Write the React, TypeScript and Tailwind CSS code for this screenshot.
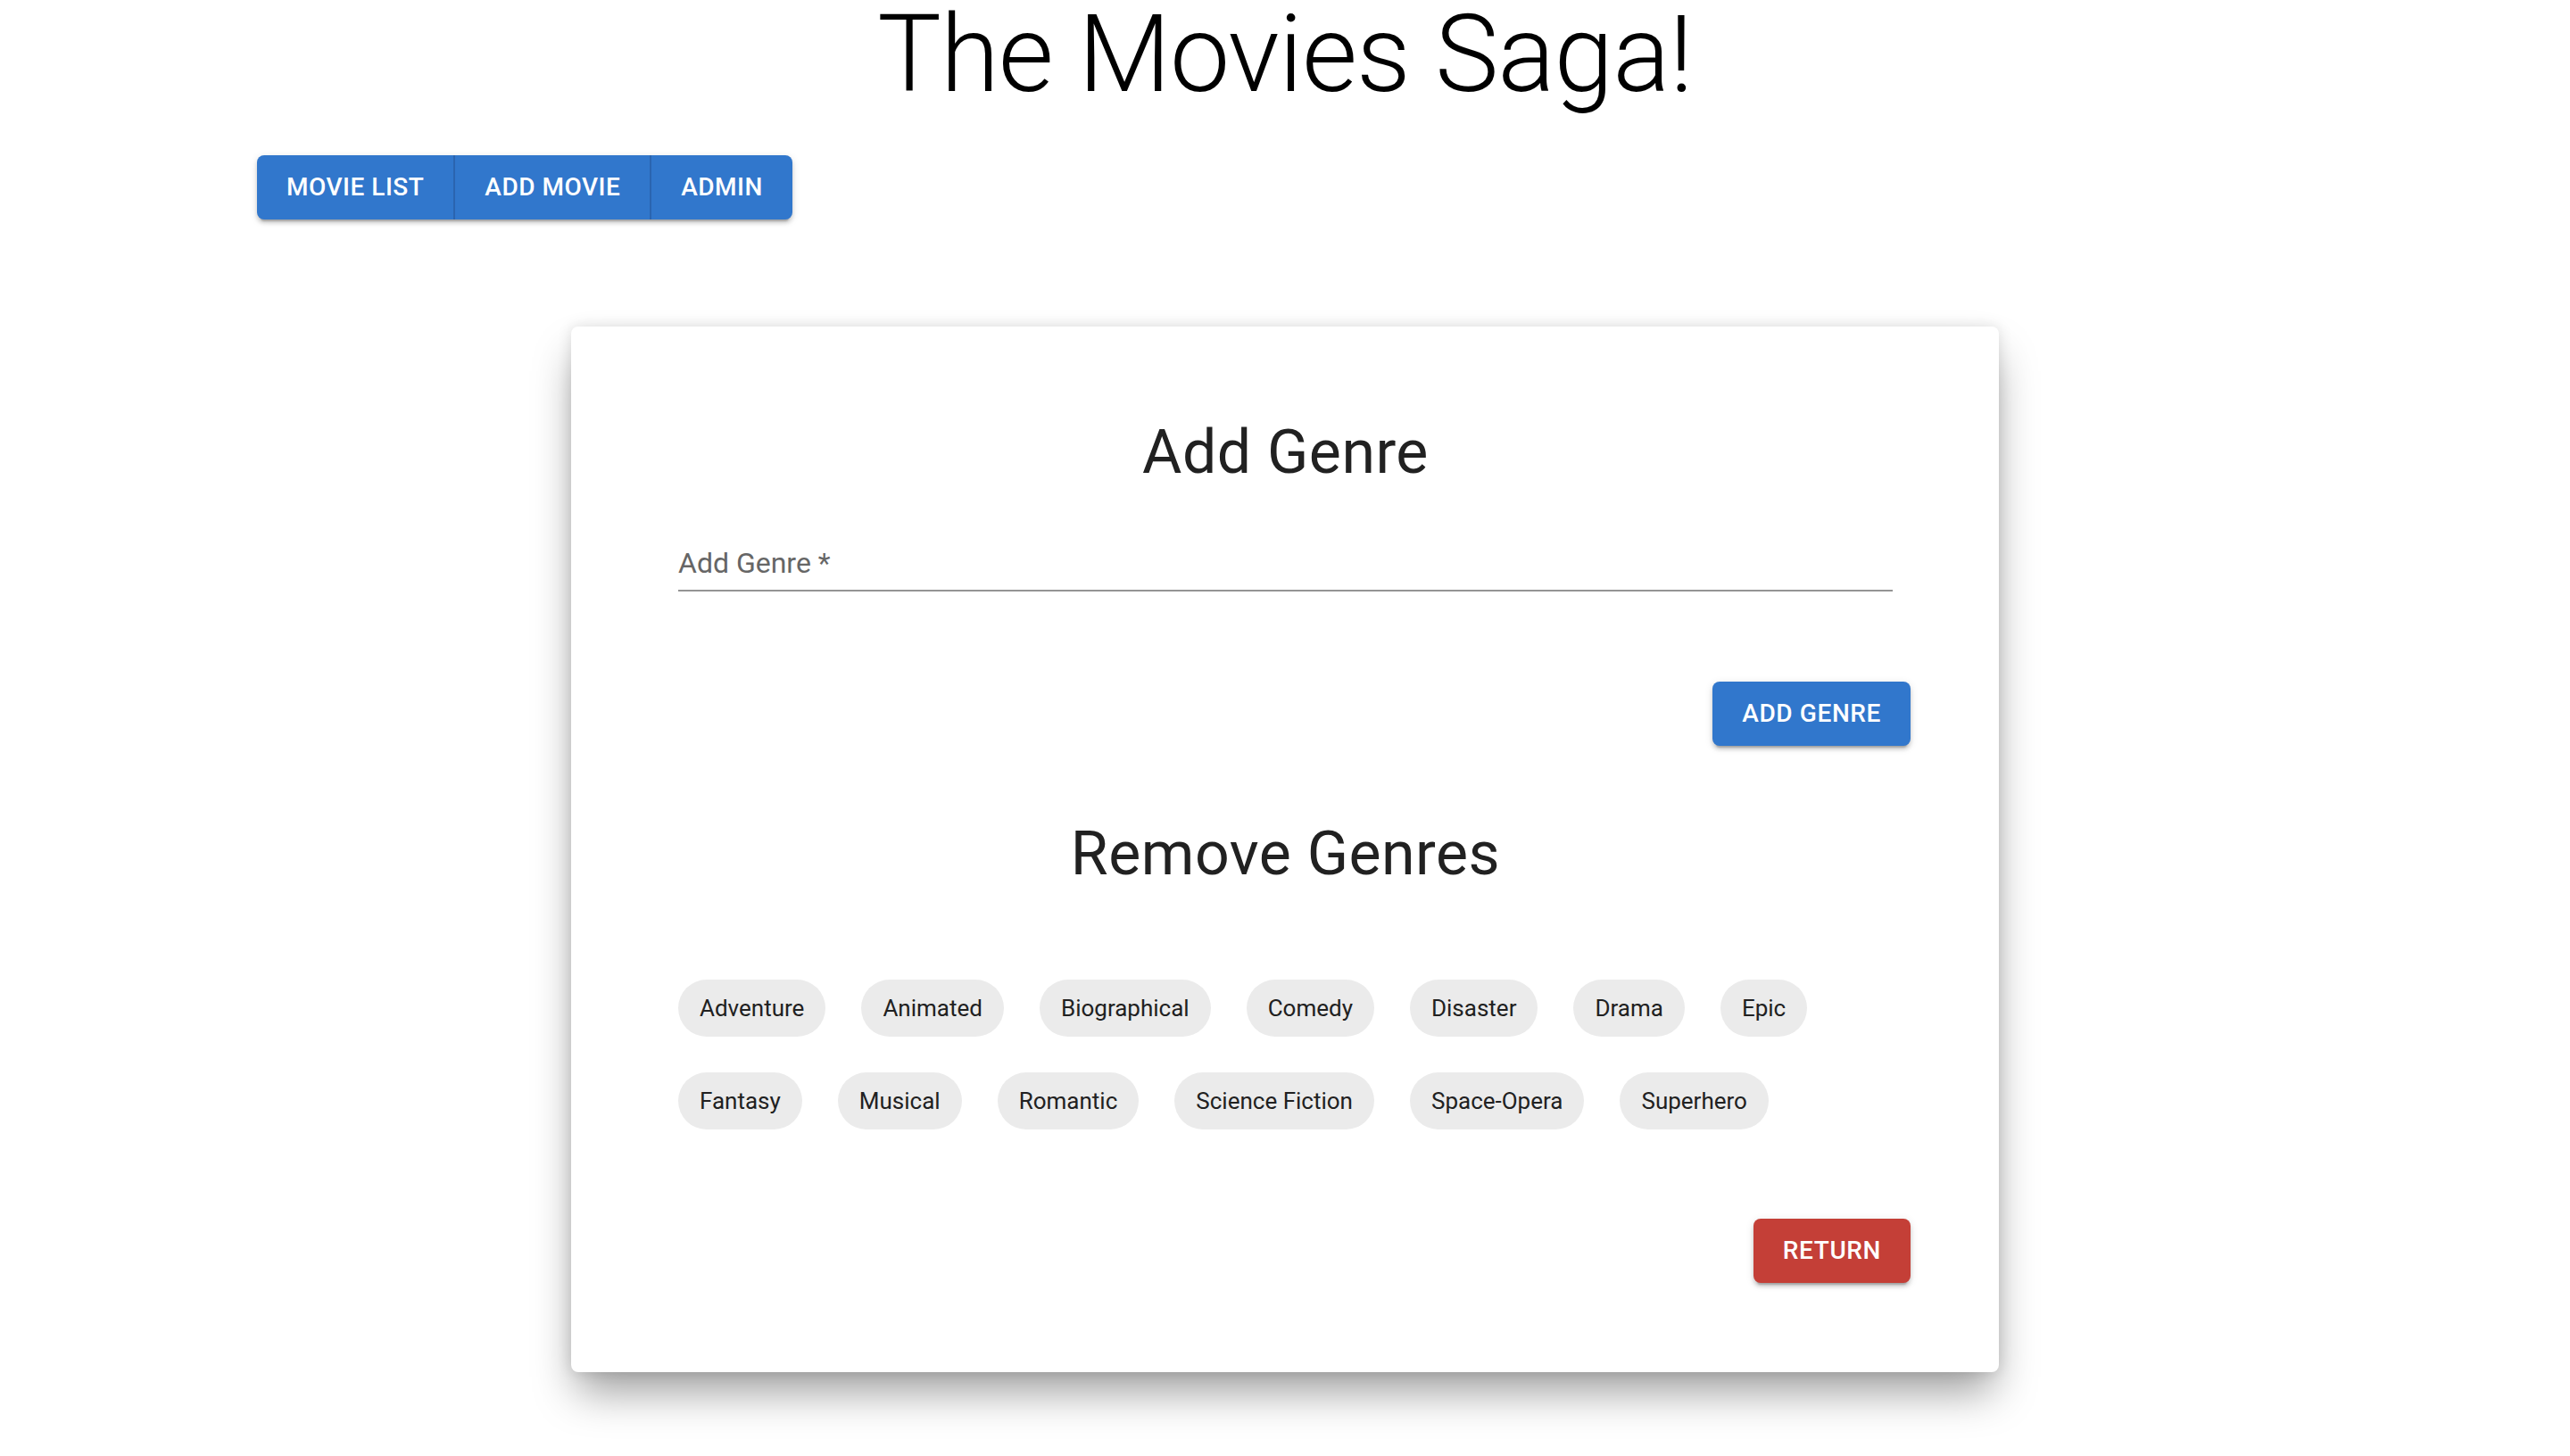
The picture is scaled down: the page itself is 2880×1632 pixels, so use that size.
import React from 'react';

const genres = [
  'Adventure',
  'Animated',
  'Biographical',
  'Comedy',
  'Disaster',
  'Drama',
  'Epic',
  'Fantasy',
  'Musical',
  'Romantic',
  'Science Fiction',
  'Space-Opera',
  'Superhero',
];

const btnShadow =
  'shadow-[0_6px_2px_-4px_rgba(0,0,0,0.2),0_4px_4px_0_rgba(0,0,0,0.14),0_2px_10px_0_rgba(0,0,0,0.12)]';

export default function App() {
  return (
    <main className="min-h-screen w-full bg-white font-['Roboto','Liberation_Sans',sans-serif]">
      {/* page title */}
      <h1 className="pt-[1px] text-center text-[120px] leading-[120px] font-light tracking-[-1px] text-black">
        The Movies Saga!
      </h1>

      {/* nav group */}
      <nav className={`mt-[53px] ml-[288px] flex w-fit h-[72px] rounded-[8px] overflow-hidden bg-[#3177cc] ${btnShadow}`}>
        <button className="px-[33px] h-full text-[28px] font-medium tracking-[0.5px] text-white border-r-2 border-[#2a64b0]">
          MOVIE LIST
        </button>
        <button className="px-[33px] h-full text-[28px] font-medium tracking-[0.5px] text-white border-r-2 border-[#2a64b0]">
          ADD MOVIE
        </button>
        <button className="px-[33px] h-full text-[28px] font-medium tracking-[0.5px] text-white">
          ADMIN
        </button>
      </nav>

      {/* card */}
      <section className="mx-auto mt-[120px] w-[1600px] rounded-[8px] bg-white pt-[101px] pb-[100px] pl-[100px] pr-[99px] shadow-[0_28px_48px_-6px_rgba(0,0,0,0.38),0_0_16px_rgba(0,0,0,0.12)]">
        <h2 className="text-center text-[68px] leading-[80px] font-normal tracking-[0.5px] text-[#212121]">
          Add Genre
        </h2>

        <div className="mx-[20px] mt-[65px] border-b-2 border-[#949494] pb-[11px]">
          <label className="block text-[32px] leading-[38px] text-[#666666]">Add Genre *</label>
        </div>

        <div className="mt-[101px] flex justify-end">
          <button className={`h-[72px] px-[33px] rounded-[8px] bg-[#3177cc] text-[28px] font-medium tracking-[0.6px] text-white ${btnShadow}`}>
            ADD GENRE
          </button>
        </div>

        <h2 className="mt-[81px] text-center text-[68px] leading-[80px] font-normal tracking-[0.5px] text-[#212121]">
          Remove Genres
        </h2>

        <div className="mt-[101px] px-[20px] flex flex-wrap gap-x-[40px] gap-y-[40px]">
          {genres.map((g) => (
            <span
              key={g}
              className="h-[64px] px-[24px] flex items-center rounded-full bg-[#ebebeb] text-[26px] text-[#212121]"
            >
              {g}
            </span>
          ))}
        </div>

        <div className="mt-[100px] flex justify-end">
          <button className={`h-[72px] px-[33px] rounded-[8px] bg-[#c43f37] text-[28px] font-medium tracking-[0.6px] text-white ${btnShadow}`}>
            RETURN
          </button>
        </div>
      </section>
    </main>
  );
}
